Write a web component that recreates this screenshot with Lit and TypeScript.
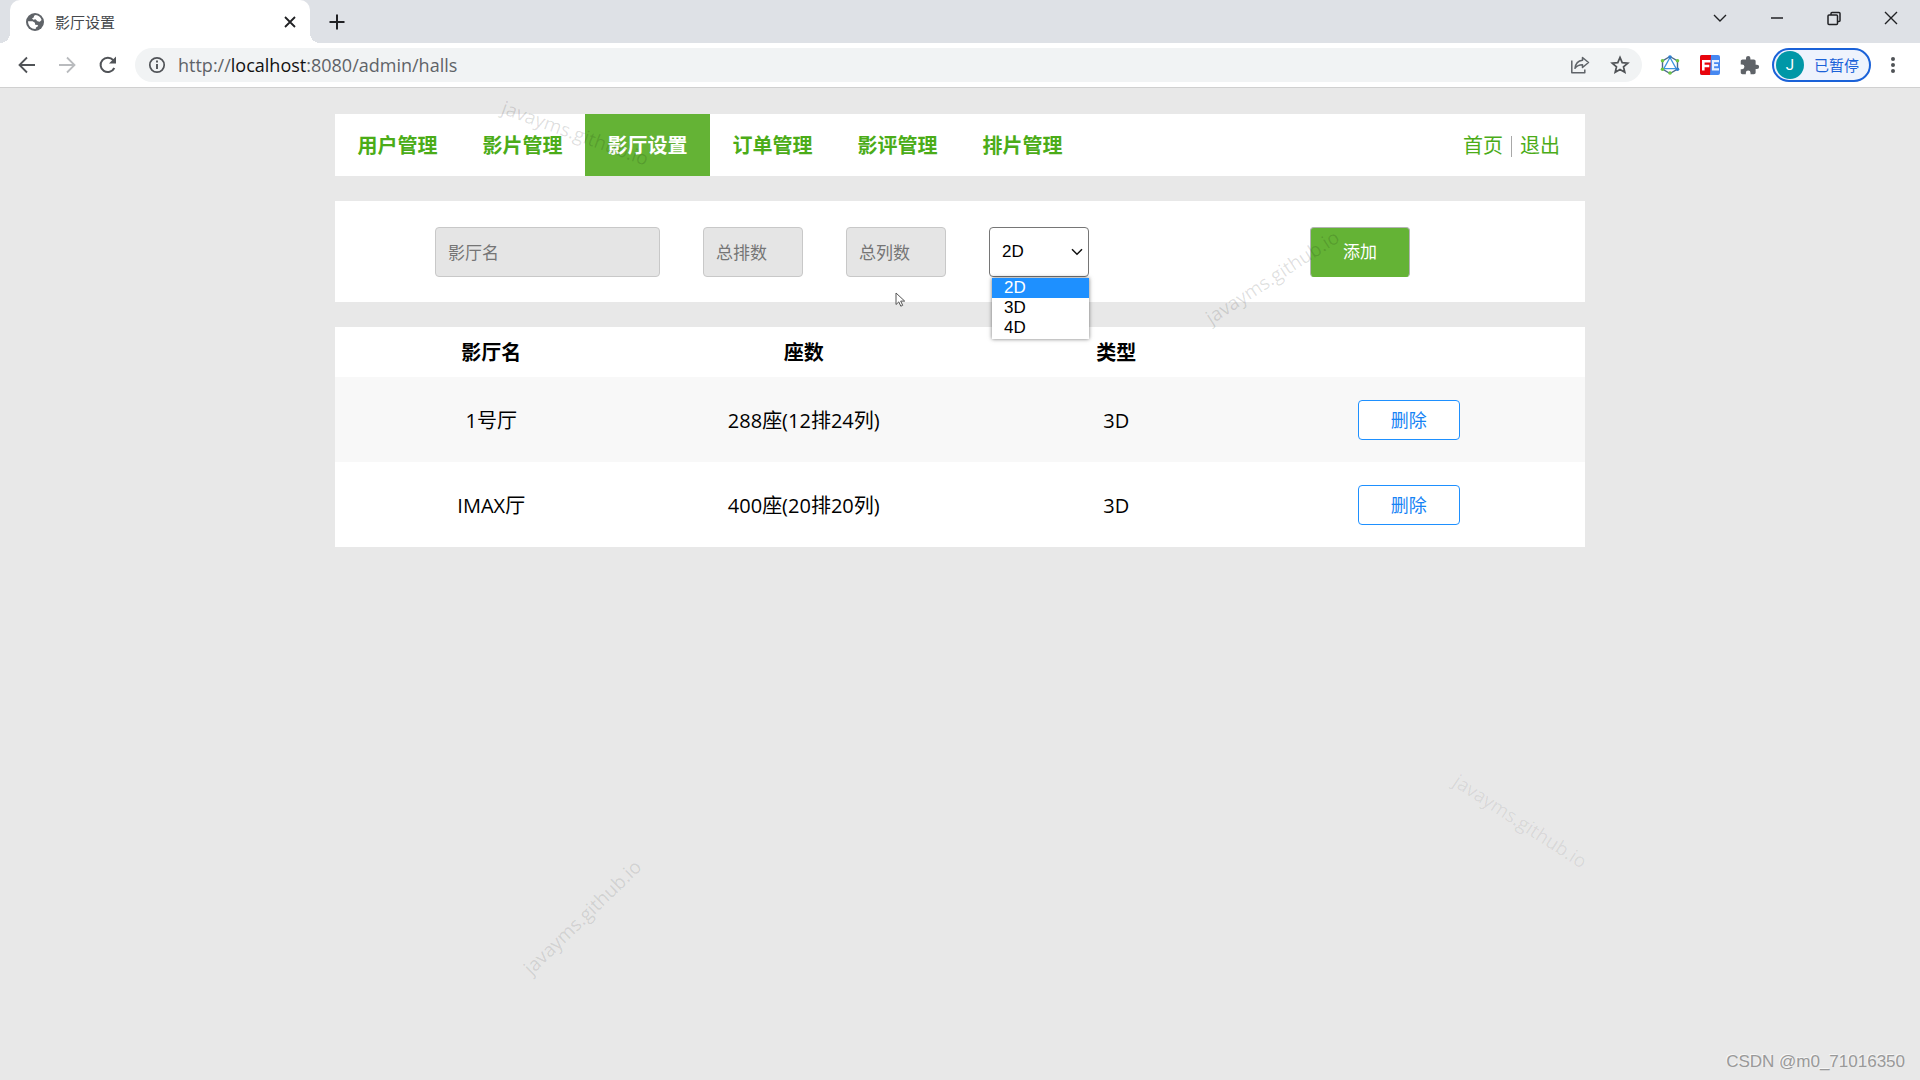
import { LitElement, html, css } from "lit";
import { customElement, state } from "lit/decorators.js";

interface Hall {
  name: string;
  rows: number;
  cols: number;
  type: string;
}

@customElement("browser-bar")
class BrowserBar extends LitElement {
  static styles = css`
    :host {
      display: block;
      font-family: "Open Sans", "Noto Sans CJK SC", sans-serif;
    }
    * {
      box-sizing: border-box;
    }
    button {
      border: 0;
      background: none;
      padding: 0;
      margin: 0;
      font: inherit;
      color: inherit;
      display: flex;
      align-items: center;
      justify-content: center;
    }
    svg {
      display: block;
    }
    .tabs {
      display: flex;
      height: 43px;
      background: #dee1e6;
      padding: 0 1px 0 10px;
    }
    .tab {
      position: relative;
      display: flex;
      align-items: center;
      width: 300px;
      background: #fff;
      border-radius: 10px 10px 0 0;
      padding: 0 12px 0 15px;
      gap: 10px;
    }
    .tab::before,
    .tab::after {
      content: "";
      position: absolute;
      bottom: 0;
      width: 10px;
      height: 10px;
    }
    .tab::before {
      left: -10px;
      background: radial-gradient(circle at 0 0, #dee1e6 10px, #fff 10px);
    }
    .tab::after {
      right: -10px;
      background: radial-gradient(circle at 100% 0, #dee1e6 10px, #fff 10px);
    }
    .title {
      flex: 1;
      font-size: 15px;
      line-height: 20px;
      color: #45484c;
    }
    .new {
      width: 34px;
      margin-left: 10px;
    }
    .window {
      display: flex;
      margin-left: auto;
      height: 36px;
    }
    .window button {
      width: 57px;
    }
    .tools {
      display: flex;
      align-items: center;
      height: 45px;
      background: #fff;
      border-bottom: 1px solid #d0d0d0;
      padding: 0 7px;
    }
    .tool {
      width: 40px;
      height: 34px;
    }
    .address {
      flex: 1;
      display: flex;
      align-items: center;
      height: 34px;
      margin: 0 8px;
      border-radius: 17px;
      background: #f1f3f4;
      padding: 0 2px 0 11px;
    }
    .url {
      flex: 1;
      margin-left: 10px;
      font-size: 18px;
      line-height: 24px;
      color: #5f6368;
      outline: none;
    }
    .host {
      color: #111;
    }
    .profile {
      height: 34px;
      margin: 0 2px;
      border: 2px solid #1b62d8;
      border-radius: 17px;
      background: #eef3fd;
      padding: 0 10px 0 2px;
      gap: 10px;
      color: #1b62d8;
      font-size: 15px;
      line-height: 20px;
    }
    .avatar {
      width: 28px;
      height: 28px;
      border-radius: 50%;
      background: #0097a7;
      color: #fff;
      font-family: Roboto, sans-serif;
      line-height: 28px;
      text-align: center;
    }
  `;

  render() {
    return html`
      <div class="tabs">
        <div class="tab">
          <svg width="20" height="20" viewBox="0 0 20 20">
            <circle cx="10" cy="10" r="9" fill="#5f6368" />
            <path
              d="M10.6 3.1c2.8.2 5.2 2 6 4.9l-1.8 1.8-2.3-.6-2-1.9-2.2.4-1.3-1.4 1.7-.8.4-1.7z"
              fill="#fff"
            />
            <path d="M3 9.3l4.6 0 2.3 1.5.3 1.9 2.4.2.6 1.2-2.2 1.4-.4 1.5C6.6 17.2 3.1 14.2 3 9.3z" fill="#fff" />
          </svg>
          <span class="title">影厅设置</span>
          <button aria-label="关闭标签页">
            <svg width="16" height="16" viewBox="0 0 16 16" stroke="#202124" stroke-width="1.8"><path d="M3 3l10 10M13 3L3 13" /></svg>
          </button>
        </div>
        <button class="new" aria-label="新标签页">
          <svg width="16" height="16" viewBox="0 0 16 16" stroke="#202124" stroke-width="2"><path d="M8 .5v15M.5 8h15" /></svg>
        </button>
        <div class="window">
          <button aria-label="搜索标签页">
            <svg width="16" height="16" viewBox="0 0 16 16" fill="none" stroke="#202124" stroke-width="1.4"><path d="M2 5l6 6 6-6" /></svg>
          </button>
          <button aria-label="最小化">
            <svg width="14" height="14" viewBox="0 0 14 14" stroke="#202124" stroke-width="1.5"><path d="M1 7h12" /></svg>
          </button>
          <button aria-label="还原">
            <svg width="16" height="16" viewBox="0 0 16 16" fill="none" stroke="#202124" stroke-width="1.5">
              <rect x="2" y="5" width="9.5" height="9.5" rx="1" />
              <path d="M5 5V3.5q0-1 1-1h7q1 0 1 1v7q0 1-1 1h-1.5" />
            </svg>
          </button>
          <button aria-label="关闭">
            <svg width="16" height="16" viewBox="0 0 16 16" stroke="#202124" stroke-width="1.4"><path d="M2 2l12 12M14 2L2 14" /></svg>
          </button>
        </div>
      </div>
      <div class="tools">
        <button class="tool" aria-label="后退">
          <svg width="18" height="18" viewBox="0 0 18 18" fill="none" stroke="#505357" stroke-width="1.8"><path d="M17 9H2M9 1.5L1.5 9 9 16.5" /></svg>
        </button>
        <button class="tool" aria-label="前进">
          <svg width="18" height="18" viewBox="0 0 18 18" fill="none" stroke="#b9bbbe" stroke-width="1.8"><path d="M1 9h15M9 1.5L16.5 9 9 16.5" /></svg>
        </button>
        <button class="tool" aria-label="重新加载">
          <svg width="20" height="20" viewBox="0 0 20 20">
            <path d="M17.3 13A7.2 7.2 0 1 1 16.3 5.2" fill="none" stroke="#505357" stroke-width="2" />
            <path d="M19 1.500V8.500H12z" fill="#505357" />
          </svg>
        </button>
        <div class="address">
          <svg width="22" height="22" viewBox="0 0 22 22">
            <circle cx="11" cy="11" r="7.2" fill="none" stroke="#505357" stroke-width="1.7" />
            <path d="M11 10v5M11 6.6v2" stroke="#505357" stroke-width="1.9" />
          </svg>
          <div class="url" role="textbox" aria-label="地址" contenteditable="true" spellcheck="false"
            >http://<span class="host">localhost</span>:8080/admin/halls</div
          >
          <button class="tool" aria-label="分享">
            <svg width="20" height="18" viewBox="0 0 20 18" fill="none" stroke="#5f6368" stroke-width="1.5" stroke-linejoin="round">
              <path d="M1.8 4.5v12.3h13v-3.3" />
              <path d="M12.5 1.5l6 5-6 5V8.7C9 8.7 6.800 9.800 5 12.300 5.500 8 8 4.800 12.500 4.300z" />
            </svg>
          </button>
          <button class="tool" aria-label="收藏">
            <svg width="20" height="20" viewBox="0 0 20 20" fill="none" stroke="#505357" stroke-width="1.7">
              <path d="M10 2.4l2.2 5.2 5.6.5-4.3 3.7 1.3 5.5L10 14.4l-4.8 2.9 1.3-5.5L2.2 8.1l5.6-.5z" />
            </svg>
          </button>
        </div>
        <button class="tool" aria-label="GraphQL">
          <svg width="20" height="20" viewBox="0 0 20 20" fill="none">
            <path d="M10 1.5l7.5 4.3v8.4L10 18.5l-7.5-4.3V5.8z" stroke="#4a6a8a" stroke-width="1.4" />
            <path d="M10 2.5l6.2 11.2H3.8z" stroke="#3d95e0" stroke-width="1.3" />
            <g fill="#6cc644">
              <circle cx="2.5" cy="5.8" r="1.8" /><circle cx="2.5" cy="14.2" r="1.8" />
              <circle cx="17.5" cy="5.8" r="1.8" /><circle cx="10" cy="18" r="1.8" />
            </g>
            <g fill="#2f7fd0"><circle cx="10" cy="2" r="1.8" /><circle cx="17.5" cy="14.2" r="1.8" /></g>
          </svg>
        </button>
        <button class="tool" aria-label="FeHelper">
          <svg width="20" height="20" viewBox="0 0 20 20" fill="none">
            <rect width="20" height="20" rx="2" fill="#4688f1" />
            <path d="M2 0h9l-1 20H2q-2 0-2-2V2q0-2 2-2z" fill="#e8040c" />
            <path d="M3.3 15.500V6.200H10.500M3.300 11h6" stroke="#fff" stroke-width="2.600" />
            <path d="M19 6.100h-6v8.300h6M12.500 10.200h5.500" stroke="#e6efff" stroke-width="2.200" />
          </svg>
        </button>
        <button class="tool" aria-label="扩展程序">
          <svg width="21" height="21" viewBox="0 0 24 24" fill="#5f6368">
            <path
              d="M20.5 11H19V7c0-1.1-.9-2-2-2h-4V3.5a2.5 2.5 0 0 0-5 0V5H4c-1.1 0-2 .9-2 2v3.8h1.5a2.7 2.7 0 0 1 0 5.4H2V20c0 1.1.9 2 2 2h3.8v-1.5a2.7 2.7 0 0 1 5.4 0V22H17c1.1 0 2-.9 2-2v-4h1.5a2.5 2.5 0 0 0 0-5z"
            />
          </svg>
        </button>
        <button class="profile"><span class="avatar">J</span>已暂停</button>
        <button class="tool" aria-label="菜单">
          <svg width="6" height="20" viewBox="0 0 6 20" fill="#505357">
            <circle cx="3" cy="4" r="2" /><circle cx="3" cy="10" r="2" /><circle cx="3" cy="16" r="2" />
          </svg>
        </button>
      </div>
    `;
  }
}

@customElement("app-root")
class AppRoot extends LitElement {
  @state() private halls: Hall[] = [
    { name: "1号厅", rows: 12, cols: 24, type: "3D" },
    { name: "IMAX厅", rows: 20, cols: 20, type: "3D" },
  ];

  private menu = ["用户管理", "影片管理", "影厅设置", "订单管理", "影评管理", "排片管理"];
  private types = ["2D", "3D", "4D"];

  static styles = css`
    :host {
      display: block;
      position: relative;
      min-height: 100vh;
      overflow: hidden;
      background: #e8e8e8;
      color: #000;
      font-family: "Open Sans", "Noto Sans CJK SC", sans-serif;
      font-size: 20px;
      line-height: 28px;
    }
    * {
      box-sizing: border-box;
    }
    a {
      color: #4bac18;
      text-decoration: none;
    }
    main {
      display: flex;
      flex-direction: column;
      gap: 25px;
      max-width: 1250px;
      margin: 0 auto;
      padding: 26px 0;
    }
    .nav {
      display: flex;
      align-items: center;
      background: #fff;
      padding-right: 25px;
    }
    .item {
      width: 10%;
      min-width: 125px;
      padding-top: 2px;
      line-height: 60px;
      text-align: center;
      font-weight: 700;
    }
    .item.on {
      background: #64b335;
      color: #fff;
    }
    .account {
      display: flex;
      align-items: center;
      gap: 8px;
      margin-left: auto;
      padding-top: 2px;
    }
    .bar {
      width: 1px;
      height: 21px;
      background: #a8a8a8;
    }
    .form {
      display: flex;
      align-items: center;
      gap: 43px;
      background: #fff;
      padding: 26px 175px 25px 100px;
    }
    .field,
    .select,
    .add {
      font: inherit;
      font-size: 17px;
      height: 50px;
      border-radius: 4px;
    }
    .field {
      flex: 0 1 100px;
      min-width: 0;
      border: 1px solid #c8c8c8;
      background: #e5e5e5;
      padding: 0 12px;
    }
    .field.wide {
      flex-basis: 225px;
    }
    .field::placeholder {
      color: #757575;
      opacity: 1;
    }
    .picker {
      position: relative;
      flex: 0 0 100px;
      display: flex;
      align-items: center;
    }
    .select,
    .options {
      font-family: "Liberation Sans", sans-serif;
    }
    .select {
      appearance: none;
      width: 100%;
      border: 1px solid #767676;
      background: #fff;
      color: #000;
      padding: 0 12px;
    }
    .chevron {
      position: absolute;
      right: 6px;
      pointer-events: none;
    }
    .options {
      position: absolute;
      z-index: 2;
      top: 51px;
      left: 3px;
      right: 0;
      margin: 0;
      padding: 0 0 1px;
      list-style: none;
      background: #fff;
      box-shadow: 0 0 4px rgba(0, 0, 0, 0.55);
      font-size: 17px;
      line-height: 20px;
    }
    .options li {
      padding: 0 12px;
    }
    .options .on {
      background: #1e90ff;
      color: #fff;
    }
    .add {
      width: 100px;
      margin-left: auto;
      border: 1px solid #b4b4b4;
      border-bottom-color: #64b335;
      background: #64b335;
      color: #fff;
    }
    table {
      width: 100%;
      table-layout: fixed;
      border-collapse: collapse;
      background: #fff;
      text-align: center;
    }
    th,
    td {
      padding: 2px 0 0;
    }
    th {
      height: 50px;
    }
    td {
      height: 85px;
    }
    td:last-child {
      padding: 0 40px 0 0;
    }
    tbody tr:nth-child(odd) {
      background: #f8f8f8;
    }
    .remove {
      width: 102px;
      height: 40px;
      border: 1px solid #1e90ff;
      border-radius: 4px;
      background: #fff;
      color: #1683f5;
      font: inherit;
      font-size: 18px;
      line-height: 24px;
      vertical-align: middle;
    }
    .mark {
      position: absolute;
      z-index: 3;
      color: rgba(0, 0, 0, 0.13);
      font-size: 19px;
      line-height: 24px;
      pointer-events: none;
    }
    .m1 {
      left: 498px;
      top: 121px;
      transform: rotate(20deg);
    }
    .m2 {
      left: 1195px;
      top: 265px;
      transform: rotate(-33deg);
    }
    .m3 {
      left: 505px;
      top: 905px;
      transform: rotate(-44deg);
      color: rgba(0, 0, 0, 0.11);
    }
    .m4 {
      left: 1443px;
      top: 809px;
      transform: rotate(33deg);
      color: rgba(0, 0, 0, 0.08);
    }
    .credit {
      position: absolute;
      right: 15px;
      bottom: 6px;
      font: 17px/24px "Liberation Sans", sans-serif;
      color: #999;
      text-shadow: -1px -1px 0 #f6f6f6;
    }
    .cursor {
      position: absolute;
      z-index: 3;
      left: 895px;
      top: 292px;
    }
  `;

  private remove(hall: Hall) {
    this.halls = this.halls.filter((h) => h !== hall);
  }

  render() {
    return html`
      <browser-bar></browser-bar>
      <main>
        <nav class="nav">
          ${this.menu.map((m) => html`<a class="item ${m === "影厅设置" ? "on" : ""}" href="#">${m}</a>`)}
          <div class="account"><a href="#">首页</a><span class="bar"></span><a href="#">退出</a></div>
        </nav>
        <form class="form" @submit=${(e: Event) => e.preventDefault()}>
          <input class="field wide" aria-label="影厅名" placeholder="影厅名" />
          <input class="field" aria-label="总排数" placeholder="总排数" />
          <input class="field" aria-label="总列数" placeholder="总列数" />
          <div class="picker">
            <select class="select" aria-label="类型">
              ${this.types.map((t) => html`<option>${t}</option>`)}
            </select>
            <svg class="chevron" width="12" height="8" viewBox="0 0 12 8" fill="none" stroke="#111" stroke-width="1.5">
              <path d="M1 1.3l5 5 5-5" />
            </svg>
            <ul class="options" role="listbox" aria-label="类型">
              ${this.types.map((t, i) => html`<li role="option" class=${i === 0 ? "on" : ""}>${t}</li>`)}
            </ul>
          </div>
          <button class="add" type="submit">添加</button>
        </form>
        <table>
          <thead>
            <tr>
              <th>影厅名</th>
              <th>座数</th>
              <th>类型</th>
              <th></th>
            </tr>
          </thead>
          <tbody>
            ${this.halls.map(
              (h) => html`<tr>
                <td>${h.name}</td>
                <td>${h.rows * h.cols}座(${h.rows}排${h.cols}列)</td>
                <td>${h.type}</td>
                <td><button class="remove" @click=${() => this.remove(h)}>删除</button></td>
              </tr>`
            )}
          </tbody>
        </table>
      </main>
      ${[1, 2, 3, 4].map((n) => html`<span class="mark m${n}">javayms.github.io</span>`)}
      <svg class="cursor" width="12" height="16" viewBox="0 0 12 16">
        <path d="M1 1v11.500l2.800-2.600 2 4.300 1.900-.9-2-4.200h4z" fill="#fff" stroke="#555" stroke-width="1" />
      </svg>
      <span class="credit">CSDN @m0_71016350</span>
    `;
  }
}
